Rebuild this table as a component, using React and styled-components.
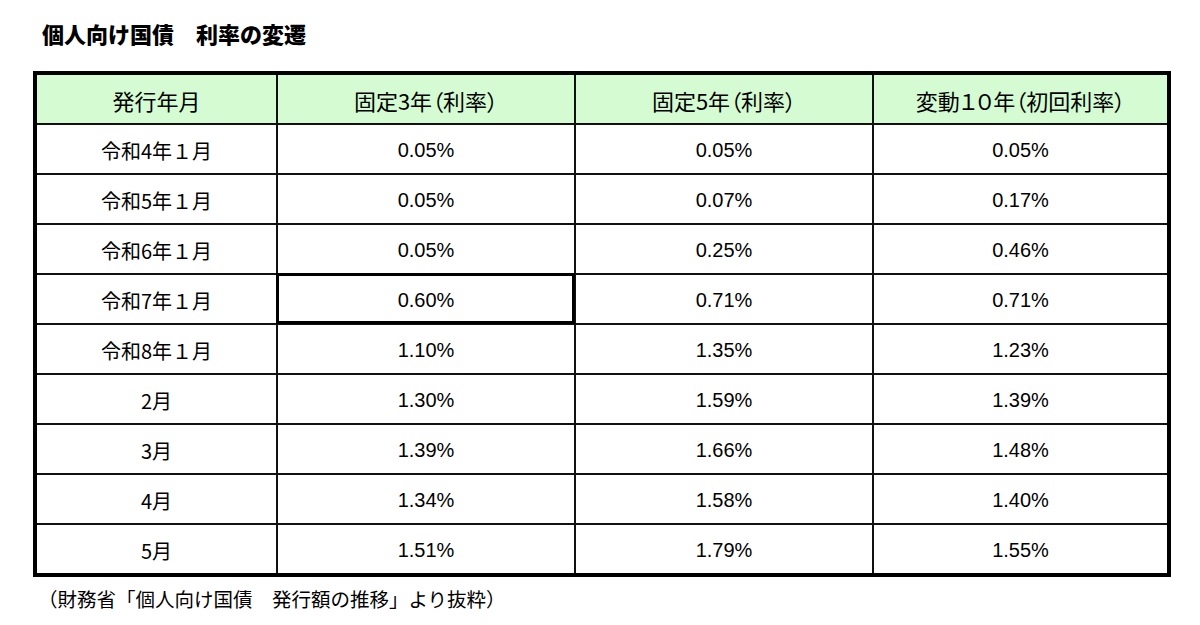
import React from "react";
import styled, { createGlobalStyle, css } from "styled-components";

const GlobalStyle = createGlobalStyle`
  body {
    margin: 0;
    background: #fff;
    color: #111;
    font-family: "Liberation Sans", "Noto Sans CJK JP", sans-serif;
  }
`;

const Page = styled.div`
  padding: 20px 0 0 33px;
`;

const Title = styled.h1`
  margin: 0 0 25px 9px;
  font-family: "Noto Sans CJK JP", sans-serif;
  font-size: 22px;
  font-weight: 900;
  line-height: 26px;
  color: #000;
`;

const Table = styled.table`
  border-collapse: separate;
  border-spacing: 0;
  border: 4px solid #000;
  width: 1138px;
  table-layout: fixed;
`;

const cellBase = css`
  padding: 0;
  text-align: center;
  border-right: 2px solid #111;
  border-bottom: 2px solid #111;
  &:last-child {
    border-right: none;
  }
`;

const Head = styled.th`
  ${cellBase}
  height: 46px;
  background: #d4fbd1;
  font-family: "Noto Sans CJK JP", sans-serif;
  font-feature-settings: "palt";
  font-size: 22px;
  font-weight: 400;
  padding-top: 2px;
  color: #000;
`;

const Row = styled.tr`
  &:last-child td {
    border-bottom: none;
    height: 45px;
  }
`;

const Cell = styled.td`
  ${cellBase}
  height: 45px;
  padding-top: 3px;
  font-size: 20px;
  color: #000;
  font-family: ${(p) =>
    p.$label
      ? `"Noto Sans CJK JP", sans-serif`
      : `"Liberation Sans", "Noto Sans CJK JP", sans-serif`};
  position: relative;
  ${(p) =>
    p.$selected &&
    css`
      &::after {
        content: "";
        position: absolute;
        left: -2px;
        top: -2px;
        right: -1px;
        bottom: -1px;
        border: 3px solid #000;
        pointer-events: none;
      }
    `}
`;

const Note = styled.p`
  margin: 10px 0 0 5px;
  font-family: "Noto Sans CJK JP", sans-serif;
  font-size: 19.5px;
  line-height: 24px;
  color: #000;
`;

const columns = [
  { label: "発行年月", width: 241 },
  { label: "固定3年（利率）", width: 298 },
  { label: "固定5年（利率）", width: 298 },
  { label: "変動１０年（初回利率）", width: 293 },
];

const rows = [
  ["令和4年１月", "0.05%", "0.05%", "0.05%"],
  ["令和5年１月", "0.05%", "0.07%", "0.17%"],
  ["令和6年１月", "0.05%", "0.25%", "0.46%"],
  ["令和7年１月", "0.60%", "0.71%", "0.71%"],
  ["令和8年１月", "1.10%", "1.35%", "1.23%"],
  ["2月", "1.30%", "1.59%", "1.39%"],
  ["3月", "1.39%", "1.66%", "1.48%"],
  ["4月", "1.34%", "1.58%", "1.40%"],
  ["5月", "1.51%", "1.79%", "1.55%"],
];

export default function App() {
  return (
    <>
      <GlobalStyle />
      <Page>
        <Title>個人向け国債　利率の変遷</Title>
        <Table>
          <colgroup>
            {columns.map((c) => (
              <col key={c.label} style={{ width: c.width }} />
            ))}
          </colgroup>
          <thead>
            <tr>
              {columns.map((c) => (
                <Head key={c.label}>{c.label}</Head>
              ))}
            </tr>
          </thead>
          <tbody>
            {rows.map((r, i) => (
              <Row key={r[0]}>
                {r.map((v, j) => (
                  <Cell key={j} $label={j === 0} $selected={i === 3 && j === 1}>
                    {v}
                  </Cell>
                ))}
              </Row>
            ))}
          </tbody>
        </Table>
        <Note>（財務省「個人向け国債　発行額の推移」より抜粋）</Note>
      </Page>
    </>
  );
}
